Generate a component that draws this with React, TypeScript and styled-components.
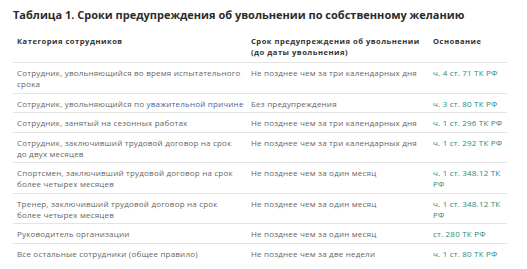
import React from 'react';
import styled, { createGlobalStyle } from 'styled-components';

const GlobalStyle = createGlobalStyle`
  html, body {
    margin: 0;
    padding: 0;
    background: #ffffff;
  }
  body {
    font-family: 'Open Sans', 'Liberation Sans', sans-serif;
    -webkit-font-smoothing: antialiased;
  }
`;

const Page = styled.div`
  padding: 8px 20px 0 13px;
  width: 494px;
`;

const Title = styled.h3`
  margin: 0 0 10px;
  font-size: 11px;
  line-height: 14px;
  font-weight: 700;
  color: #2b2b2b;
  white-space: nowrap;
`;

const Table = styled.table`
  width: 494px;
  border-collapse: collapse;
  table-layout: fixed;
`;

const HeadCell = styled.th`
  padding: 4px 0 4px 4px;
  font-size: 7.6px;
  line-height: 11px;
  letter-spacing: 0.5px;
  font-weight: 700;
  color: #333;
  text-align: left;
  vertical-align: top;
  border-bottom: 1px solid #e4e4e4;
`;

const Cell = styled.td`
  padding: 4px 0 3.5px 4px;
  font-size: 8px;
  line-height: 11px;
  letter-spacing: 0.2px;
  color: #666;
  vertical-align: top;
  border-bottom: 1px solid #e4e4e4;
`;

const Row = styled.tr`
  &:last-child ${Cell} {
    border-bottom: none;
  }
`;

// keeps a short phrase on one line, as the source table wraps it
const Phrase = styled.span`
  white-space: nowrap;
`;

const Ref = styled.a<{ $tone?: 'teal' | 'blue' }>`
  color: ${(p) => (p.$tone === 'blue' ? '#3d5fa6' : '#2a8a76')};
  text-decoration: none;
`;

interface Term {
  who: React.ReactNode;
  term: string;
  basis: string;
}

const terms: Term[] = [
  { who: 'Сотрудник, увольняющийся во время испытательного срока', term: 'Не позднее чем за три календарных дня', basis: 'ч. 4 ст. 71 ТК РФ' },
  {
    who: (
      <>
        Сотрудник, увольняющийся по <Ref $tone='blue' href='#'>уважительной причине</Ref>
      </>
    ),
    term: 'Без предупреждения',
    basis: 'ч. 3 ст. 80 ТК РФ'
  },
  { who: 'Сотрудник, занятый на сезонных работах', term: 'Не позднее чем за три календарных дня', basis: 'ч. 1 ст. 296 ТК РФ' },
  {
    who: (
      <>
        Сотрудник, заключивший трудовой договор на срок <Phrase>до двух месяцев</Phrase>
      </>
    ),
    term: 'Не позднее чем за три календарных дня',
    basis: 'ч. 1 ст. 292 ТК РФ'
  },
  {
    who: (
      <>
        Спортсмен, заключивший трудовой договор на срок <Phrase>более четырех месяцев</Phrase>
      </>
    ),
    term: 'Не позднее чем за один месяц',
    basis: 'ч. 1 ст. 348.12 ТК РФ'
  },
  {
    who: (
      <>
        Тренер, заключивший трудовой договор на срок <Phrase>более четырех месяцев</Phrase>
      </>
    ),
    term: 'Не позднее чем за один месяц',
    basis: 'ч. 1 ст. 348.12 ТК РФ'
  },
  { who: 'Руководитель организации', term: 'Не позднее чем за один месяц', basis: 'ст. 280 ТК РФ' },
  { who: 'Все остальные сотрудники (общее правило)', term: 'Не позднее чем за две недели', basis: 'ч. 1 ст. 80 ТК РФ' }
];

export default function App() {
  return (
    <Page>
      <GlobalStyle />
      <Title>Таблица 1. Сроки предупреждения об увольнении по собственному желанию</Title>
      <Table>
        <colgroup>
          <col style={{ width: 234 }} />
          <col style={{ width: 182 }} />
          <col style={{ width: 78 }} />
        </colgroup>
        <thead>
          <tr>
            <HeadCell>Категория сотрудников</HeadCell>
            <HeadCell>Срок предупреждения об увольнении (до даты увольнения)</HeadCell>
            <HeadCell>Основание</HeadCell>
          </tr>
        </thead>
        <tbody>
          {terms.map((t, i) => (
            <Row key={i}>
              <Cell>{t.who}</Cell>
              <Cell>{t.term}</Cell>
              <Cell>
                <Ref href='#'>{t.basis}</Ref>
              </Cell>
            </Row>
          ))}
        </tbody>
      </Table>
    </Page>
  );
}
